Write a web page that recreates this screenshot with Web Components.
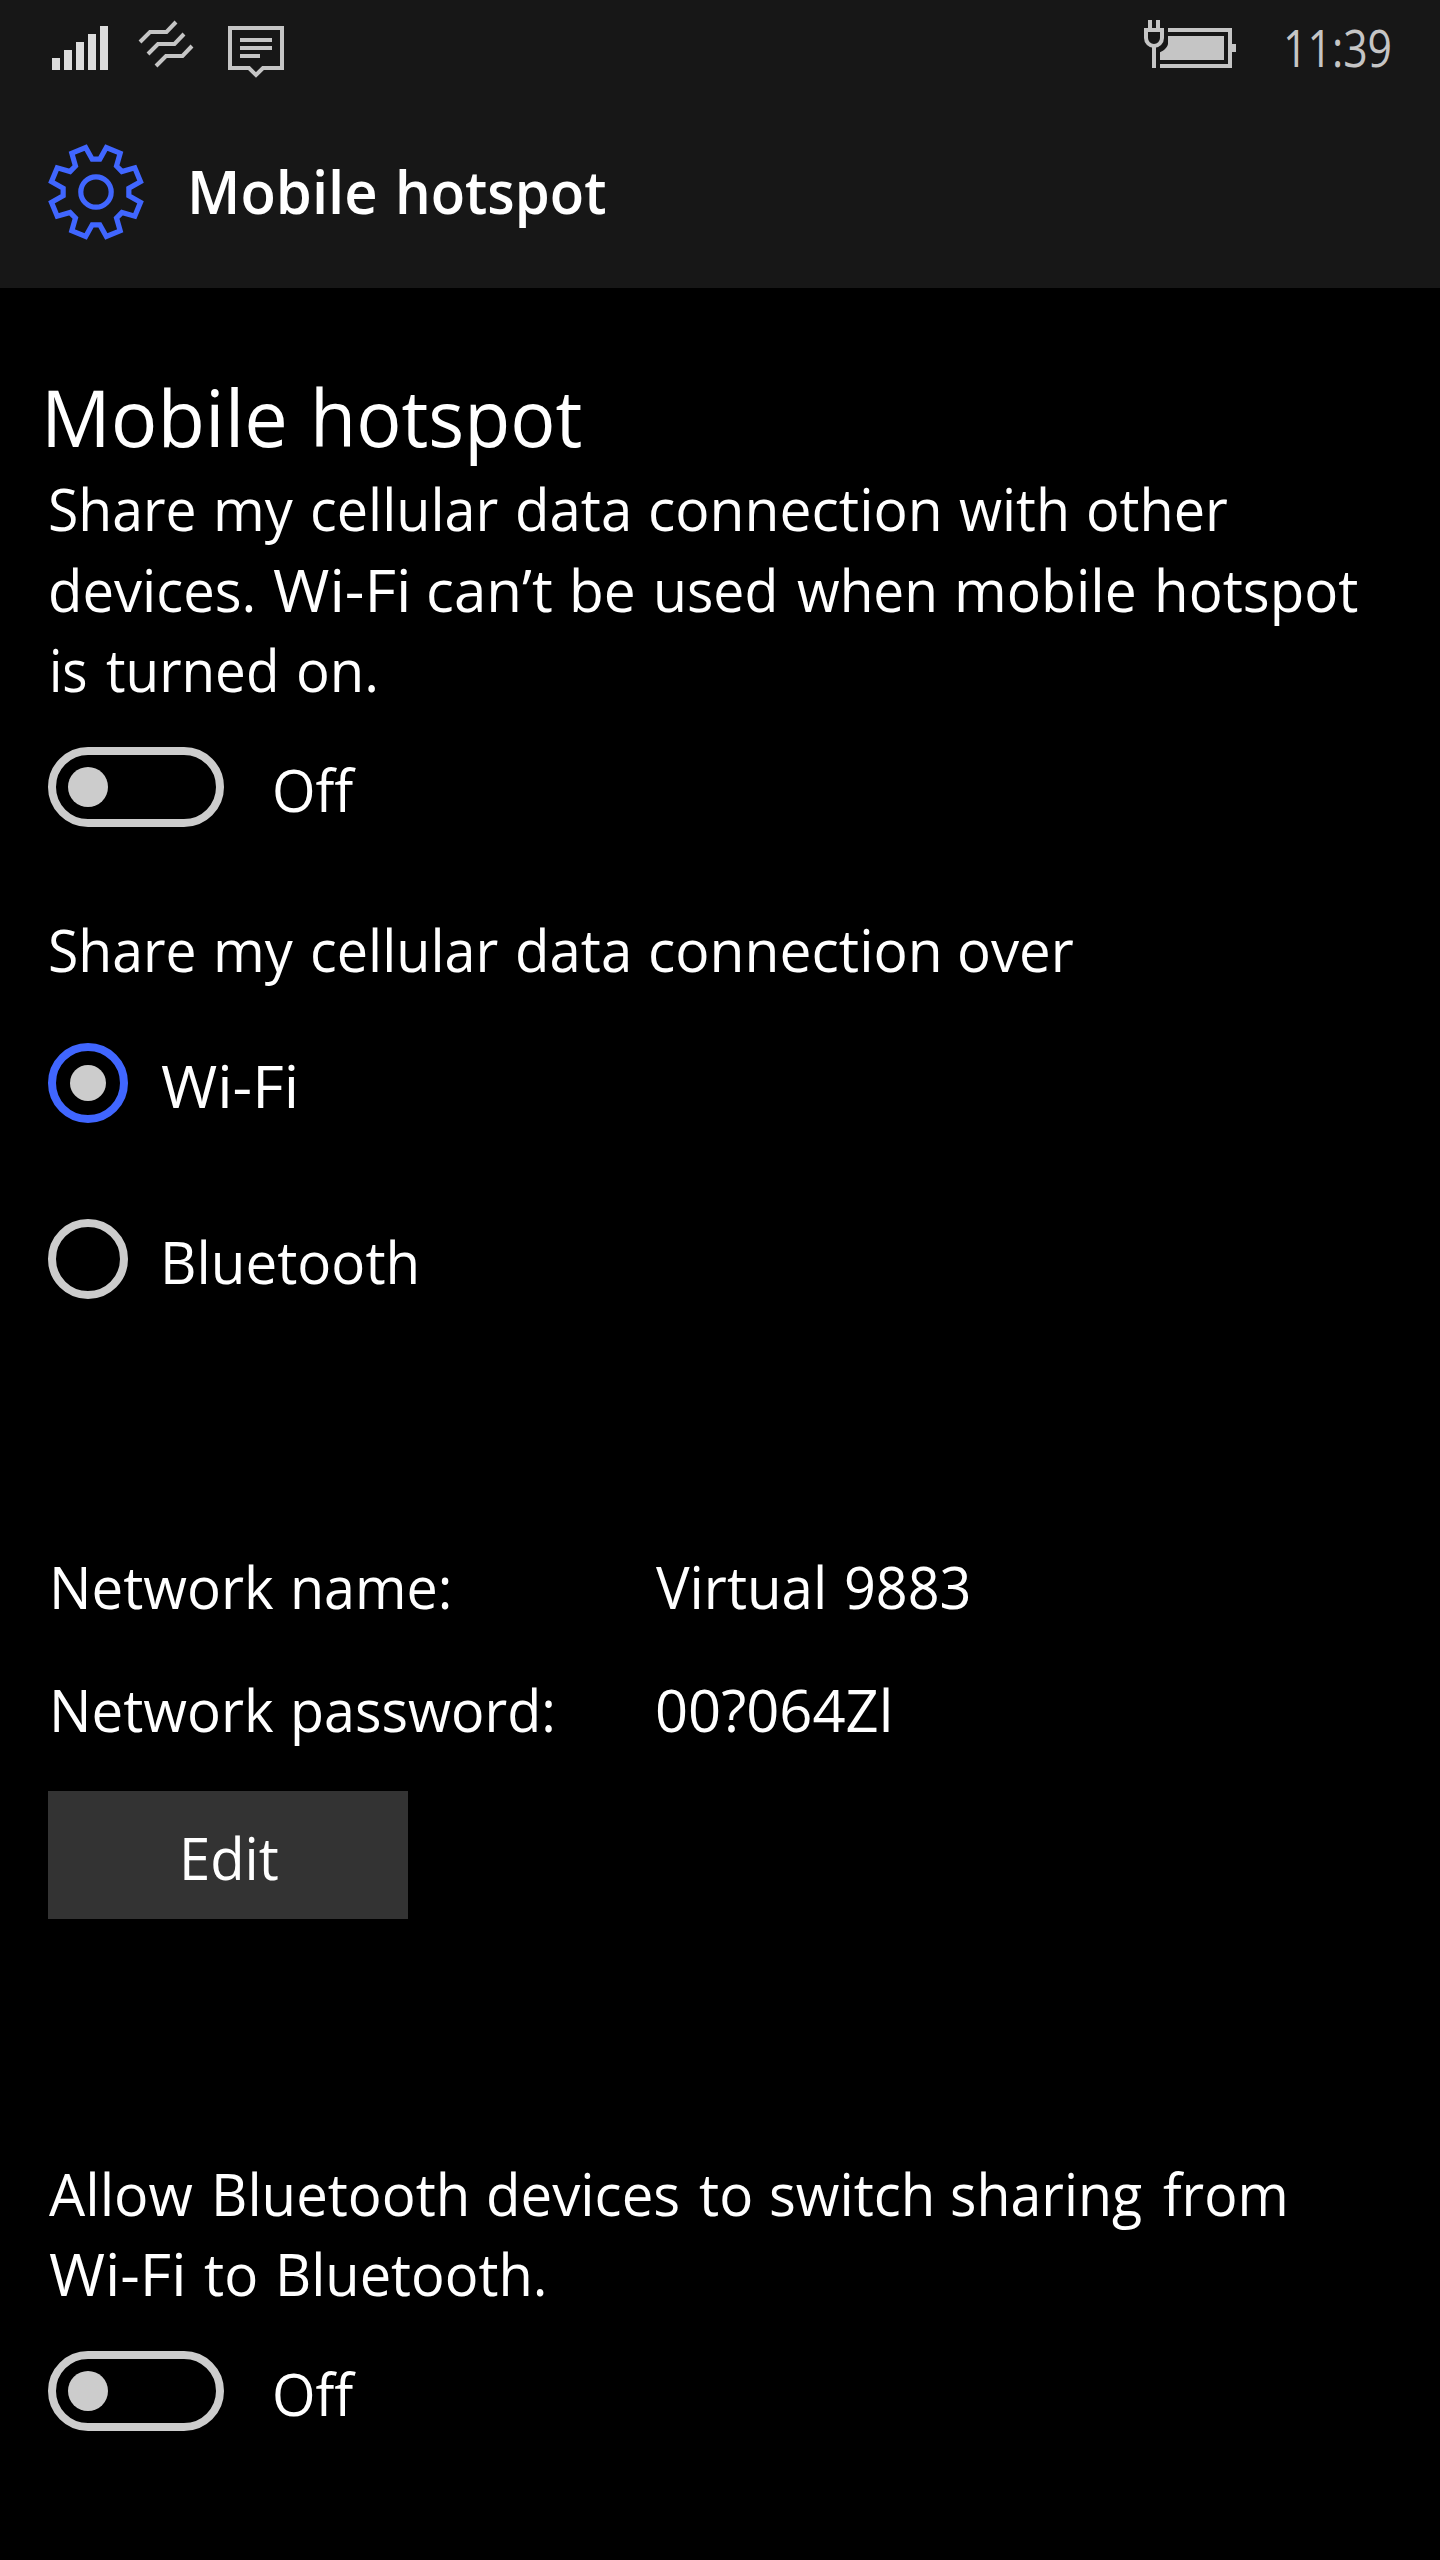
<!DOCTYPE html>
<html lang="en">
<head>
<meta charset="utf-8">
<title>Mobile hotspot</title>
<style>
html,body{margin:0;padding:0;background:#000}
body{width:1440px;height:2560px;overflow:hidden;font-family:"Open Sans","Noto Sans",sans-serif;color:#fff}
</style>
</head>
<body>
<hotspot-page></hotspot-page>
<script>
// A single line of text whose words are set to exact visible widths.
// at: "start-end" for each word; origin: the container edge those values count from.
class FitLine extends HTMLElement {
  constructor() {
    super();
    this.attachShadow({mode: 'open'});
  }
  connectedCallback() {
    const words = this.getAttribute('text').split(' ');
    const spans = this.getAttribute('at').split(' ').map(p => p.split('-').map(Number));
    const origin = Number(this.getAttribute('origin') || 48);
    const cs = getComputedStyle(this);
    const ctx = document.createElement('canvas').getContext('2d');
    ctx.font = cs.fontWeight + ' ' + cs.fontSize + ' ' + cs.fontFamily;
    const boxes = words.map((w, i) => {
      const m = ctx.measureText(w);
      const [start, end] = spans[i];
      const scale = (end - start) / (m.actualBoundingBoxLeft + m.actualBoundingBoxRight);
      return {w, scale, x: start + m.actualBoundingBoxLeft * scale - origin, end: end - origin};
    });
    this.shadowRoot.innerHTML =
      '<style>:host{display:flex;white-space:pre}span{display:block;flex:none;transform-origin:0 50%}</style>' +
      boxes.map((b, i) => {
        const next = boxes[i + 1];
        const width = (next ? next.x : b.end) - b.x;
        return `<span style="width:${width.toFixed(2)}px;transform:scaleX(${b.scale.toFixed(4)});${i ? '' : `margin-left:${b.x.toFixed(2)}px`}">${b.w}${next ? ' ' : ''}</span>`;
      }).join('');
  }
}
customElements.define('fit-line', FitLine);

const define = (name, html) => customElements.define(name, class extends HTMLElement {
  constructor() {
    super();
    this.attachShadow({mode: 'open'}).innerHTML = html;
  }
});

define('status-bar', `
<style>
:host{display:flex;justify-content:space-between;height:96px;color:#c5c5c5}
svg{display:block;flex:none}
.right{display:flex;width:320px}
.time{width:200px;font-size:52px;line-height:93px}
</style>
<svg width="310" height="96" viewBox="0 0 310 96">
  <path fill="#dcdcdc" d="M52 58h8v12h-8zM64 50h8v20h-8zM76 42h8v28h-8zM88 34h8v36h-8zM100 26h8v44h-8z"/>
  <g fill="none" stroke="#c5c5c5" stroke-width="4">
    <path d="M140 42L150 32H166.500L176 22M148 54L158 44H174.500L184 34M156 66L166 56H182.500L192 46"/>
    <path d="M230 28H282V68H263L256 75L249 68H230Z"/>
    <path d="M240 40H272M240 48H272M240 56H260"/>
  </g>
</svg>
<div class="right">
  <svg width="120" height="96" viewBox="1120 0 120 96" fill="#c5c5c5">
    <path d="M1168 28H1232V44H1236V52H1232V68H1160V64H1228V32H1168Z"/>
    <path d="M1168 36H1224V60H1160V52.300C1164 50.500 1168 47 1168 43.500Z"/>
    <path d="M1148 20h4v8h-4zM1156 20h4v8h-4zM1152 46h4v22h-4z"/>
    <path fill="none" stroke="#c5c5c5" stroke-width="4" d="M1146 30H1162V38A8 8 0 0 1 1146 38Z"/>
  </svg>
  <div class="time"><fit-line origin="1240" at="1286-1389.500" text="11:39"></fit-line></div>
</div>`);

const gearPoints = [];
for (let k = 0; k < 8; k++) {
  for (const [r, a] of [[33.06, 6.6], [45.7, 13.06], [45.7, 31.94], [33.06, 38.4]]) {
    const t = (a + 45 * k) * Math.PI / 180;
    gearPoints.push((r * Math.sin(t)).toFixed(2) + ',' + (-r * Math.cos(t)).toFixed(2));
  }
}

define('title-bar', `
<style>
:host{display:flex;align-items:center;height:192px;padding-left:48px;font-size:59px;font-weight:600}
svg{display:block;flex:none}
.title{line-height:80px;padding-bottom:3px}
</style>
<svg width="96" height="96" viewBox="-48 -48 96 96" fill="none" stroke="#4066ff" stroke-width="5.200">
  <polygon points="${gearPoints.join(' ')}"/><circle r="15.200"/>
</svg>
<div class="title"><fit-line origin="144" at="191.700-375.500 398.500-604.800" text="Mobile hotspot"></fit-line></div>`);

define('toggle-switch', `
<style>
:host{display:flex;height:80px}
.track{box-sizing:border-box;width:176px;height:80px;border:8px solid #ccc;border-radius:40px;display:flex;align-items:center;padding-left:12px}
.thumb{width:40px;height:40px;border-radius:50%;background:#ccc}
.label{line-height:80px;padding-top:2px}
</style>
<div class="track"><div class="thumb"></div></div>
<div class="label"><fit-line origin="224" at="274.500-356" text="Off"></fit-line></div>`);

define('radio-option', `
<style>
:host{display:flex;height:80px}
.ring{box-sizing:border-box;width:80px;height:80px;border:8px solid #ccc;border-radius:50%;display:flex;align-items:center;justify-content:center}
.dot{display:none;width:36px;height:36px;border-radius:50%;background:#ccc}
:host([checked]) .ring{border-color:#4066ff}
:host([checked]) .dot{display:block}
.label{line-height:80px;padding-top:2px}
</style>
<div class="ring"><div class="dot"></div></div>
<div class="label"><slot></slot></div>`);

define('info-row', `
<style>
:host{display:grid;grid-template-columns:604px 1fr;height:80px;line-height:80px}
</style>
<slot name="name"></slot><slot name="value"></slot>`);

define('push-button', `
<style>
:host{display:block;box-sizing:border-box;width:360px;height:128px;background:#333;padding-top:5px;line-height:122px}
</style>
<slot></slot>`);

define('hotspot-page', `
<style>
:host{display:flex;flex-direction:column;width:1440px;height:2560px;background:#000}
header{background:#171717;height:288px}
main{display:flex;flex-direction:column;padding:78px 0 0 48px;font-size:59px;line-height:80px}
h1{margin:0 0 -1px;font-size:78px;font-weight:400;line-height:103px}
.intro{line-height:80.500px}
.switch{margin-top:37.500px}
.over{margin-top:82px}
.radios{display:flex;flex-direction:column;gap:96px;margin-top:54px}
.info{display:flex;flex-direction:column;gap:43.500px;margin-top:246.500px}
push-button{margin-top:42px}
.allow{margin-top:234px}
.last{margin-top:38px}
</style>
<header><status-bar></status-bar><title-bar></title-bar></header>
<main>
  <h1><fit-line at="47.900-284 315.700-581.500" text="Mobile hotspot"></fit-line></h1>
  <div class="intro">
    <fit-line at="51-194.700 217.500-293 312.600-498 517.500-627.300 650.500-938.400 958.900-1066 1089.300-1228.300" text="Share my cellular data connection with other"></fit-line>
    <fit-line at="50.800-253 273.300-407.700 428.700-551.400 574.200-634 656.300-774 796.900-934 959-1134.800 1159-1357.600" text="devices. Wi-Fi can’t be used when mobile hotspot"></fit-line>
    <fit-line at="52.300-85.400 105.900-275.500 299.200-376" text="is turned on."></fit-line>
  </div>
  <toggle-switch class="switch"></toggle-switch>
  <div class="over"><fit-line at="51-194.700 217.500-293 312.600-498 517.500-627.300 650.500-938.400 960-1073.700" text="Share my cellular data connection over"></fit-line></div>
  <div class="radios">
    <radio-option checked><fit-line origin="128" at="161-295" text="Wi-Fi"></fit-line></radio-option>
    <radio-option><fit-line origin="128" at="164.600-416" text="Bluetooth"></fit-line></radio-option>
  </div>
  <div class="info">
    <info-row><fit-line slot="name" at="53.300-273.100 294.400-448.800" text="Network name:"></fit-line><fit-line slot="value" origin="652" at="656-822.500 846-969" text="Virtual 9883"></fit-line></info-row>
    <info-row><fit-line slot="name" at="53.300-273.100 294.800-552.700" text="Network password:"></fit-line><fit-line slot="value" origin="652" at="657.300-888.900" text="00?064Zl"></fit-line></info-row>
  </div>
  <push-button><fit-line at="183.400-277.500" text="Edit"></fit-line></push-button>
  <div class="allow">
    <fit-line at="49.200-193.400 215.700-466.200 488.900-678.200 698.800-750.600 770.500-931 952-1141.300 1163.300-1284.700" text="Allow Bluetooth devices to switch sharing from"></fit-line>
    <fit-line at="49.200-182.700 204.100-255.900 279.900-544.300" text="Wi-Fi to Bluetooth."></fit-line>
  </div>
  <toggle-switch class="last"></toggle-switch>
</main>`);
</script>
</body>
</html>
